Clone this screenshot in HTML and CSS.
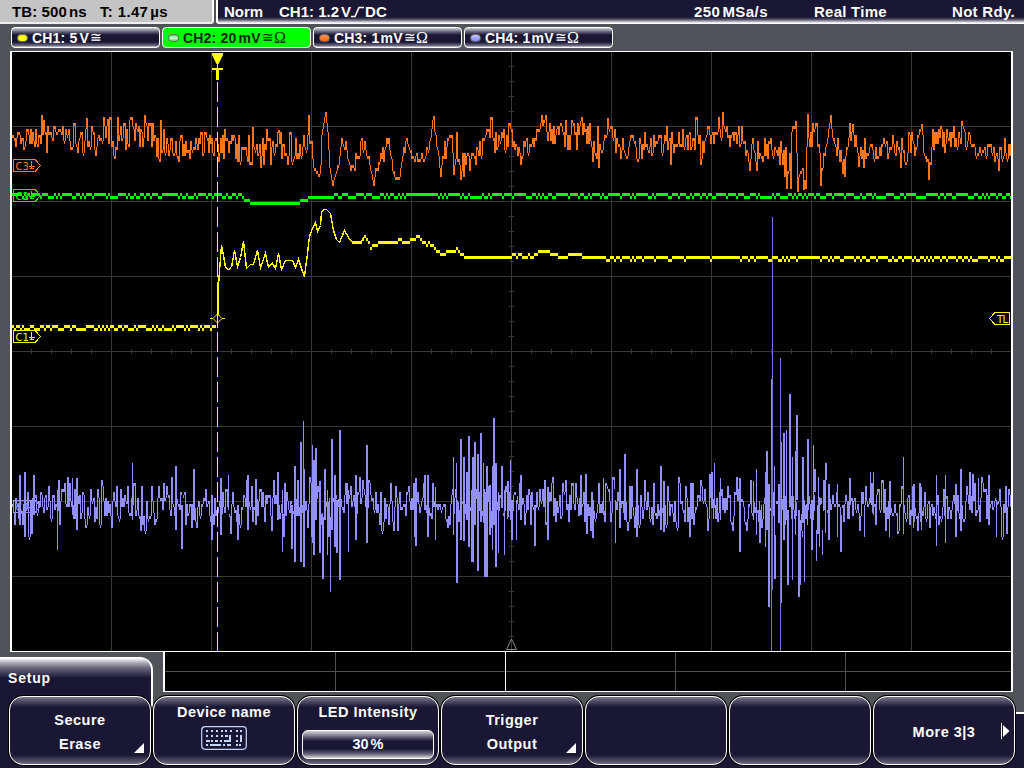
FILE: index.html
```html
<!DOCTYPE html>
<html lang="en">
<head>
<meta charset="utf-8">
<title>Oscilloscope</title>
<link rel="stylesheet" href="styles.css">
</head>
<body>
<div class="scope">
  <header class="topbar">
    <div class="timebase"><span class="tb">TB: 500<i class="thin"></i>ns</span><span class="delay">T: 1.47<i class="thin"></i>µs</span></div>
    <div class="trigger">
      <span class="mode">Norm</span>
      <span class="source">CH1: 1.2<i class="thin"></i>V<svg class="edge" width="14" height="12" viewBox="0 0 14 12"><path d="M0 10.5H4L8 1.5H13" fill="none" stroke="#fff" stroke-width="1.6"/></svg>DC</span>
      <span class="rate">250<i class="thin"></i>MSa/s</span>
      <span class="realtime">Real Time</span>
      <span class="status">Not Rdy.</span>
    </div>
  </header>
  <nav class="channels">
    <div class="channel"><i class="led yellow"></i>CH1: 5<i class="thin"></i>V<span class="sym">≅</span></div>
    <div class="channel active"><i class="led green"></i>CH2: 20<i class="thin"></i>mV<span class="sym">≅</span><span class="ohm">Ω</span></div>
    <div class="channel"><i class="led orange"></i>CH3: 1<i class="hair"></i>mV<span class="sym">≅</span><span class="ohm">Ω</span></div>
    <div class="channel"><i class="led violet"></i>CH4: 1<i class="hair"></i>mV<span class="sym">≅</span><span class="ohm">Ω</span></div>
  </nav>
  <main class="screen">
    <svg class="plot" width="999" height="599" viewBox="12 52 999 599">
      <g id="grid" class="grid"></g>
      <path id="c4" class="wave violet-line"/>
      <path class="wave violet-dark" d="M772.5 217V590M771.5 470V651M780.5 360V651"/>
      <path id="c3" class="wave orange-line"/>
      <path id="c1flat" class="wave yellow-bold"/>
      <path id="c1" class="wave yellow-line"/>
      <path id="c2" class="wave green-line"/>
      <path class="cursor" d="M217.5 82V651"/>
      <path d="M212 53H223V55L218.5 64H216.5L212 55Z" fill="#ff0"/>
      <path d="M212 69H223" class="tmark"/>
      <path d="M217.5 69V80" class="tstem"/>
      <path d="M217.5 64V69" class="tline"/>
      <path d="M210 318.5H213L217.5 314L222 318.5H225M213 318.5L217.5 323L222 318.5" fill="none" stroke="#ff0"/>
      <g class="tag" stroke="#ff7a22" fill="none"><path d="M13.5 159.5H35L40.5 165.5L35 171.5H13.5Z"/><text x="15.5" y="169.5" fill="#ff7a22">C3</text><path d="M31.5 161V168M29 166.5H35M30 168.5H34"/></g>
      <g class="tag" stroke="#0f0" fill="none"><path d="M13.5 189.5H35L40.5 195.5L35 201.5H13.5Z"/><text x="15.5" y="199.5" fill="#0f0">C2</text><path d="M31.5 191V198M29 196.5H35M30 198.5H34"/></g>
      <g class="tag" stroke="#ff0" fill="none"><path d="M13.5 330.5H35L40.5 336.5L35 342.5H13.5Z"/><text x="15.5" y="340.5" fill="#ff0">C1</text><path d="M31.5 332V339M29 337.5H35M30 339.5H34"/></g>
      <g class="tag" stroke="#9290ff" fill="none"><path d="M13.5 500.5H35L40.5 506.5L35 512.5H13.5Z"/><text x="15.5" y="510.5" fill="#9290ff">C4</text><path d="M31.5 502V509M29 507.5H35M30 509.5H34"/></g>
      <g class="tag" stroke="#ff0" fill="none"><path d="M1009.5 312.5H995L989.5 318.5L995 324.5H1009.5Z"/><text x="997" y="322.5" fill="#ff0" textLength="11">TL</text></g>
      <path d="M511.5 639L516.5 649.5H506.5Z" fill="none" stroke="#888"/>
    </svg>
  </main>
  <div class="overview">
    <svg width="846" height="39" viewBox="165 652 846 39"><path d="M165 671.5H1011M335.5 652V691M675.5 652V691M845.5 652V691" stroke="#505050"/><path d="M505.5 652V691" stroke="#fff"/></svg>
  </div>
  <footer class="menu">
    <div class="ground"></div>
    <div class="tab">Setup</div>
    <div class="buttons">
      <button class="key"><span>Secure</span><span>Erase</span><i class="corner"></i></button>
      <button class="key top"><span>Device name</span>
        <svg class="keyboard" width="46" height="24" viewBox="0 0 46 24"><rect x=".7" y=".7" width="44.6" height="22.6" rx="3.5" fill="none" stroke="#c4d4ff" stroke-width="1.2"/><path d="M5 5H31M5 10H27M5 15H9M10 15H12M14 15H17M19 15H21M23 15H30M29 9V16M5 19H7M9 19H20M22 19H24M26 19H30M35 5H37M39 5H41M35 10H37M40 9V16M35 15H37M35 19H37M38 19H40" stroke="#c4d4ff" stroke-width="2" fill="none"/><path d="M7 5H10M12 5H15M17 5H20M22 5H24M26 5H29M7 10H10M12 10H15M17 10H20M22 10H24" stroke="#1a1734" stroke-width="2.4"/></svg>
      </button>
      <button class="key top"><span>LED Intensity</span><span class="value">30<i class="thin"></i>%</span></button>
      <button class="key"><span>Trigger</span><span>Output</span><i class="corner"></i></button>
      <button class="key"></button>
      <button class="key"></button>
      <button class="key more"><span>More 3|3</span><svg class="next" width="10" height="18" viewBox="0 0 10 18"><path d="M1.5 1V17" stroke="#fff"/><path d="M3 3L9.5 9L3 15Z" fill="#fff"/></svg></button>
    </div>
  </footer>
</div>
<script src="waves.js"></script>
</body>
</html>
```
FILE: styles.css
```css
* { box-sizing: border-box; }
body { margin: 0; background: #505357; font-family: "Liberation Sans", Arial, sans-serif; font-weight: bold; color: #fff; }
.scope { width: 1024px; height: 768px; overflow: hidden; display: flex; flex-direction: column; }
.thin { display: inline-block; width: 2px; }
.hair { display: inline-block; width: 1px; }
.topbar { display: flex; gap: 2px; height: 24px; flex: none; font-size: 15px; line-height: 24px; white-space: nowrap; }
.timebase { width: 214px; padding-left: 12px; background: #c4c4c4; color: #000; border-right: 2px solid #fff; border-bottom: 2px solid #eee; border-bottom-right-radius: 3px; }
.tb { display: inline-block; width: 88px; letter-spacing: .1px; }
.delay { letter-spacing: .35px; }
.trigger { flex: 1; display: flex; padding-left: 6px; border-left: 2px solid #fff; border-bottom: 1px solid #fff; border-bottom-left-radius: 3px; background: linear-gradient(#1a1734 17px, #413e58 19px, #9997a6 21px, #fff 23px); }
.mode { width: 55px; }
.source { width: 415px; }
.edge { vertical-align: -1px; }
.rate { width: 120px; letter-spacing: .45px; }
.realtime { width: 138px; letter-spacing: .25px; }
.status { letter-spacing: .3px; }
.channels { display: flex; gap: 2px; height: 27px; flex: none; padding: 3px 0 0 11px; }
.channel { width: 149px; height: 21px; display: flex; align-items: center; padding-left: 5px; border: 1px solid #fff; border-radius: 4px; background: linear-gradient(#d0d0d8, #77758a 3px, #1a1734 7px 14px, #77758a 18px, #e4e4e8); font-size: 14px; line-height: 18px; letter-spacing: .2px; white-space: pre; }
.channel.active { background: #0f0; color: #002b00; }
.led { width: 11px; height: 8px; margin-right: 4px; border: 1px solid #666; border-radius: 5px; flex: none; }
.yellow { background: #ff0; }
.green { background: linear-gradient(#6c6, #dfd, #6c6); }
.orange { background: linear-gradient(#ff9558, #ff6a10); }
.violet { background: linear-gradient(#c8c8ff, #8080ff); }
.sym { font: 14px/18px "Liberation Serif", "DejaVu Serif", serif; margin-left: 1px; }
.ohm { font: 16px/18px "Liberation Serif", serif; }
.screen { height: 601px; width: 1003px; flex: none; margin-left: 10px; background: #000; border: solid #fff; border-width: 1px 2px; }
.plot { display: block; }
.grid { stroke: #383838; fill: none; shape-rendering: crispEdges; }
.wave { fill: none; stroke-width: 1; shape-rendering: crispEdges; }
.violet-line { stroke: #9290ff; }
.violet-dark { stroke: #7472cc; }
.orange-line { stroke: #ff751a; }
.yellow-line { stroke: #ff0; stroke-width: 1.4; }
.yellow-bold { stroke: #ff0; stroke-width: 3; }
.green-line { stroke: #0f0; stroke-width: 3; }
.cursor { stroke: #ff3; stroke-dasharray: 20 5; shape-rendering: crispEdges; }
.tmark { stroke: #ff0; stroke-width: 2; shape-rendering: crispEdges; }
.tstem { stroke: #ff0; stroke-width: 3; shape-rendering: crispEdges; }
.tline { stroke: #ff0; shape-rendering: crispEdges; }
.tag text { font: 10px "DejaVu Sans", sans-serif; stroke: none; }
.tag path { shape-rendering: crispEdges; }
.overview { width: 850px; height: 40px; flex: none; margin-left: 163px; background: #000; border: 2px solid #fff; border-width: 0 2px 1px; }
.overview svg { display: block; }
.menu { height: 76px; flex: none; display: grid; grid-template-rows: 20px 56px; }
.tab { grid-area: 1 / 1 / 3 / 2; width: 153px; height: 62px; margin-top: -35px; padding: 10px 0 0 8px; border: solid #fff; border-width: 1px 2px 0 0; border-top-right-radius: 13px; background: linear-gradient(#fff, #aaa8b6 5px, #69667d 10px, #1a1734 20px); font-size: 14px; line-height: 20px; letter-spacing: .8px; }
.ground { grid-area: 2 / 1; background: #1a1734; border-top: 2px solid #fff; }
.buttons { grid-area: 1 / 1 / 3 / 2; display: flex; gap: 2px; padding: 4px 0 0 9px; align-items: flex-start; }
.key { font: bold 14.5px/24px "Liberation Sans", Arial, sans-serif; letter-spacing: .5px; color: #fff; position: relative; display: flex; flex-direction: column; align-items: center; justify-content: center; width: 142px; height: 69px; padding: 2px 0 0; border: 1px solid #fff; border-radius: 14px; background: linear-gradient(#77758a, #1a1734 10px 58px, #77758a 68px); box-shadow: 0 0 0 1px #000; white-space: nowrap; }
.key.top { justify-content: flex-start; padding-top: 3px; }
.keyboard { margin-top: 2px; }
.value { width: 132px; height: 29px; margin-top: 6px; line-height: 26px; letter-spacing: 0; border: 1px solid #fff; border-radius: 6px; background: linear-gradient(#d5d5db, #656279 6px, #1a1734 10px 18px, #656279 23px, #d5d5db); text-align: center; }
.corner { position: absolute; right: 6px; bottom: 11px; border: 5px solid #fff; border-left-color: transparent; border-top-color: transparent; }
.next { position: absolute; right: 4px; top: 25px; }
```
FILE: waves.js
```js
(function () {
  var seed = 40961;
  function rnd() {
    seed = (seed * 1664525 + 1013904223) >>> 0;
    return seed / 4294967296;
  }
  function noise() { return rnd() + rnd() - 1; }
  function set(id, d) { document.getElementById(id).setAttribute("d", d); }

  // Graticule with minor ticks along both centre axes
  var g = "", i;
  for (i = 111; i < 1011; i += 100) g += "M" + (i + .5) + " 52V651";
  for (i = 126; i < 651; i += 75) g += "M12 " + (i + .5) + "H1011";
  for (i = 31; i < 1011; i += 20) g += "M" + (i + .5) + " 349V354";
  for (i = 66; i < 651; i += 15) g += "M509 " + (i + .5) + "H514";
  document.getElementById("grid").innerHTML = '<path d="' + g + '"/>';

  function interp(list, x, k) {
    for (var n = 1; n < list.length; n++) {
      if (x <= list[n][0]) {
        var a = list[n - 1], b = list[n];
        return a[k] + (b[k] - a[k]) * (x - a[0]) / (b[0] - a[0]);
      }
    }
    return list[list.length - 1][k];
  }
  function snap(y) { return Math.round(y / 3) * 3; }
  // One pixel column spanning two levels, at least three pixels tall
  function column(x, a, b) {
    var lo = Math.min(a, b), hi = Math.max(a, b);
    return "M" + (x + .5) + " " + lo + "V" + Math.max(hi, lo + 3);
  }

  // Channel 3: x, centre, spread
  var env3 = [[12,138,11],[35,139,16],[50,137,14],[80,134,18],[100,140,24],[125,136,18],[145,135,20],
    [160,141,18],[178,152,17],[200,140,16],[217,147,16],[235,145,17],[250,150,20],[275,151,18],[297,154,20],
    [307,150,18],[309,142,10],[311,150,4],[313,169,3],[316,180,5],[320,168,2],[321,137,1],[323,123,1],[325,114,2],[327,132,2],
    [329,170,2],[332,186,2],[336,171,4],[341,143,9],[345,149,8],[352,173,7],[358,153,13],[363,141,8],
    [367,160,4],[372,184,4],[377,164,8],[382,158,8],[388,139,9],[392,168,3],[394,180,2],[398,177,3],
    [402,158,5],[406,139,5],[411,160,9],[424,160,11],[430,140,6],[433,118,6],[435,137,14],[439,168,9],
    [445,149,14],[449,135,5],[454,154,22],[463,161,20],[472,157,15],[480,149,11],[486,130,14],[497,138,16],
    [510,140,14],[520,155,10],[530,144,13],[537,136,12],[543,118,7],[548,140,20],[565,134,15],[580,134,18],
    [592,149,18],[598,148,22],[603,142,9],[608,127,9],[617,147,14],[640,149,15],[670,146,17],[686,140,17],
    [695,140,20],[701,152,14],[707,134,10],[715,136,13],[722,126,12],[730,144,15],[737,129,12],[747,154,14],
    [762,151,17],[775,150,12],[782,160,17],[787,176,22],[790,134,9],[795,124,8],[797,162,30],[802,175,20],[805,155,30],
    [809,153,32],[813,131,13],[818,138,19],[820,178,8],[824,158,9],[829,130,15],[835,151,12],[843,157,20],
    [850,135,12],[859,155,14],[870,154,17],[885,145,12],[900,150,18],[912,146,20],[920,138,14],[927,161,18],
    [935,136,12],[947,144,17],[962,132,15],[975,151,12],[992,148,19],[1001,155,15],[1010,152,16]];
  var peaks3 = {41:115,86:118,107:119,114:159,144:115,156:157,178:162,252:127,278:130,308:115,325:112,
    332:186,373:186,433:116,440:177,453:175,520:165,541:115,545:115,580:121,598:168,607:118,
    722:112,749:171,786:189,790:189,795:121,797:192,803:190,805:189,820:186,830:115,844:177,852:124,858:167,921:124,928:180,961:121};
  var d = "", x, y, prev = 138;
  for (x = 12; x <= 1010; x++) {
    if (peaks3[x]) y = peaks3[x];
    else if (rnd() < .08) y = prev;
    else y = snap(interp(env3, x, 1) - 1 + noise() * interp(env3, x, 2) * 1.25);
    d += column(x, prev, y);
    prev = y;
  }
  set("c3", d);

  // Channel 4: background spread plus bars as x, top, bottom
  var bars = [[20,475,525],[25,472,537],[34,475,515],[57,490,550],[72,478,515],[77,478,530],[132,463,520],
    [176,466,530],[182,505,549],[194,469,520],[212,495,540],[221,478,535],[228,475,510],[238,505,540],[248,475,530],
    [256,479,525],[278,472,520],[282,490,552],[292,505,549],[295,466,562],[301,442,562],[303,421,535],[304,469,567],
    [312,445,543],[314,460,555],[316,448,520],[320,481,553],[323,517,579],[325,469,520],[327,490,555],[330,517,592],
    [332,439,530],[335,475,547],[337,500,553],[340,430,580],[348,490,552],[356,475,540],[367,445,543],
    [416,478,546],[425,475,510],[428,475,537],[435,487,540],[453,457,535],[456,463,540],[457,500,583],[461,439,540],
    [464,457,541],[467,472,520],[469,436,547],[471,490,562],[473,457,562],[475,442,525],[477,475,567],
    [478,454,571],[481,433,522],[483,463,523],[485,492,577],[487,466,577],[490,485,535],[492,466,550],
    [494,418,525],[496,463,567],[498,492,553],[502,466,508],[504,490,555],[508,481,517],[510,460,520],
    [512,500,540],[516,500,540],[521,475,520],[535,505,546],[548,487,540],[581,475,515],[593,500,538],[603,478,515],
    [615,500,543],[620,469,528],[625,454,520],[637,469,537],[661,466,530],[664,481,532],[712,472,508],[714,463,508],
    [720,478,520],[740,478,552],[753,481,520],[756,469,535],[760,510,543],[765,472,547],[767,451,530],[769,484,607],
    [771,379,560],[774,466,547],[775,535,579],[779,484,523],[780,358,500],[781,442,603],[784,433,540],
    [786,430,520],[788,510,585],[790,394,507],[792,457,580],[795,451,535],[797,415,500],[799,510,597],[800,520,585],
    [803,457,523],[804,500,582],[808,439,510],[812,500,550],[813,445,520],[815,469,492],[816,530,561],[819,497,547],
    [822,530,555],[825,469,533],[826,463,480],[829,484,540],[837,484,537],[841,515,552],[850,478,505],[864,505,537],
    [870,472,503],[873,472,515],[890,481,515],[903,457,534],[914,484,522],[921,487,530],[936,475,546],
    [945,475,543],[956,484,537],[961,469,531],[970,472,510],[978,478,510],[989,475,525],[996,500,537]];
  var bi = 0;
  d = "";
  prev = 505;
  for (x = 12; x <= 1010; x++) {
    var b = bars[bi];
    if (b && b[0] === x) {
      d += column(x, b[1], b[2]);
      if (x % 3) d += column(x - 1, b[1], b[2]);
      prev = 496 + Math.round(rnd() * 6) * 3;
      bi++;
    } else {
      y = rnd() < .06 ? prev : snap(506 + noise() * 34);
      d += column(x, prev, y);
      prev = y;
    }
  }
  set("c4", d);

  // Channel 1: settled baseline, step, ringing, slow decay
  var step = [[217,328],[218,285],[219,270],[221,245],[223,255],[225,267],[228,269],[231,267],[234,250],[237,266],
    [240,257],[243,241],[246,268],[250,264],[253,264],[257,250],[260,267],[265,253],[268,267],[272,263],[275,268],
    [278,253],[281,269],[285,260],[292,260],[295,267],[298,259],[301,268],[304,276],[307,253],[309,236],
    [312,228],[315,222],[317,231],[320,225],[321,212],[323,209],[326,209],[330,213],[333,230],[336,239],[339,242],
    [344,230],[348,237],[351,241],[360,242],[365,235],[370,245],[378,242],[390,241],[400,239],[407,241],[418,235],
    [422,242],[430,243],[437,250],[443,253],[450,249],[456,249],[464,255],[475,256],[490,256],[510,255],[520,254],
    [530,256],[540,251],[552,251],[558,256],[570,254],[580,254],[595,258]];
  d = "";
  step.forEach(function (p) {
    if (p[0] < 366) d += (d ? "L" : "M") + (p[0] + .5) + " " + (p[1] + .5);
  });
  set("c1", d);
  d = "";
  for (x = 12; x < 216; x += 2) d += "M" + x + " " + (rnd() < .5 ? 326.5 : 329.5) + "h2";
  for (x = 352; x < 1011; x += 2) {
    y = x < 596 ? Math.round((interp(step, x, 1) + noise() * 1.5 - 1) / 3) * 3 + 2 : 257 + (rnd() < .28 ? 3 : 0);
    d += "M" + x + " " + (y + .5) + "h2";
  }
  set("c1flat", d);

  // Channel 2: nearly flat with a short dip
  d = "";
  for (x = 12; x < 1011; x += 2) {
    if (x >= 250 && x < 300) y = 203.5;
    else if ((x >= 244 && x < 250) || (x >= 300 && x < 307)) y = 200.5;
    else if (x >= 307 && x < 334) y = 197.5;
    else y = rnd() < .38 ? 197.5 : 194.5;
    d += "M" + x + " " + y + "h2";
  }
  set("c2", d);
})();
```
